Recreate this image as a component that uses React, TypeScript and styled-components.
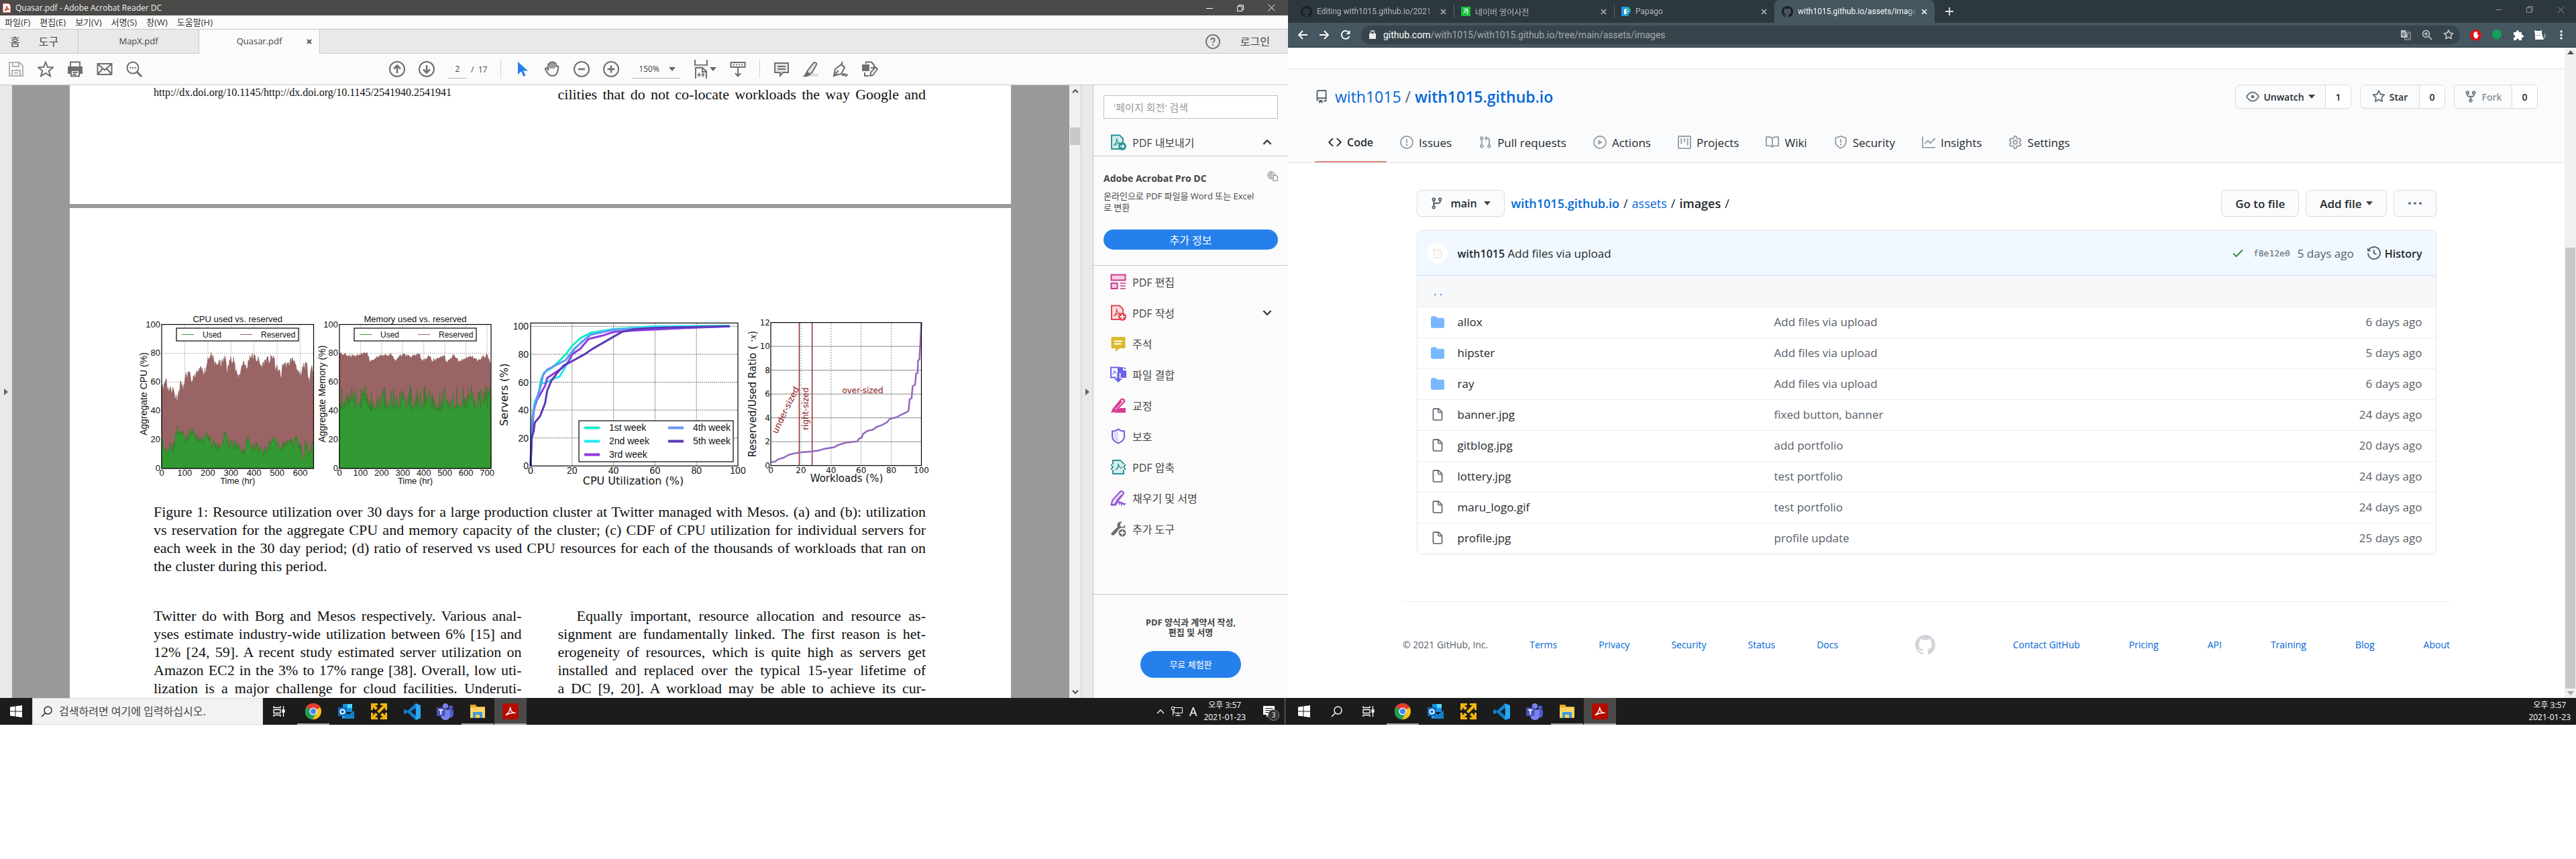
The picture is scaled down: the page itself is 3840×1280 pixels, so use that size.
import React from "react";
import styled, { createGlobalStyle, css } from "styled-components";

const sans = `"Open Sans", "Noto Sans CJK KR", sans-serif`;
const compact = `Roboto, "Noto Sans CJK KR", sans-serif`;
const serif = `"Liberation Serif", serif`;

const GlobalStyle = createGlobalStyle`
  *, *::before, *::after { box-sizing: border-box; }
  body { margin: 0; background: #fff; font-family: ${sans}; font-size: 16px; color: #24292e; }
  button, input, select { font: inherit; color: inherit; margin: 0; padding: 0; border: 0; background: none; border-radius: 0; outline: 0; }
  button { cursor: pointer; }
  a { color: inherit; text-decoration: none; }
  svg { display: block; flex: none; }
  h1, h2, p { margin: 0; font-weight: normal; }
`;

/* ---------- shared drawings ---------- */

const oct = {
  repo: "M2 2.5A2.5 2.5 0 014.5 0h8.75a.75.75 0 01.75.75v12.5a.75.75 0 01-.75.75h-2.5a.75.75 0 110-1.5h1.75v-2h-8a1 1 0 00-.714 1.7.75.75 0 01-1.072 1.05A2.495 2.495 0 012 11.5v-9zm10.5-1V9h-8c-.356 0-.694.074-1 .208V2.5a1 1 0 011-1h8zM5 12.25v3.25a.25.25 0 00.4.2l1.45-1.087a.25.25 0 01.3 0L8.6 15.7a.25.25 0 00.4-.2v-3.25a.25.25 0 00-.25-.25h-3.5a.25.25 0 00-.25.25z",
  code: "M4.72 3.22a.75.75 0 011.06 1.06L2.06 8l3.72 3.72a.75.75 0 11-1.06 1.06L.47 8.53a.75.75 0 010-1.06l4.25-4.25zm6.56 0a.75.75 0 10-1.06 1.06L13.94 8l-3.72 3.72a.75.75 0 101.06 1.06l4.25-4.25a.75.75 0 000-1.06l-4.25-4.25z",
  issue: "M8 1.5a6.5 6.5 0 100 13 6.5 6.5 0 000-13zM0 8a8 8 0 1116 0A8 8 0 010 8zm9 3a1 1 0 11-2 0 1 1 0 012 0zm-.25-6.25a.75.75 0 00-1.5 0v3.5a.75.75 0 001.5 0v-3.5z",
  pull: "M7.177 3.073L9.573.677A.25.25 0 0110 .854v4.792a.25.25 0 01-.427.177L7.177 3.427a.25.25 0 010-.354zM3.75 2.5a.75.75 0 100 1.5.75.75 0 000-1.5zm-2.25.75a2.25 2.25 0 113 2.122v5.256a2.251 2.251 0 11-1.5 0V5.372A2.25 2.25 0 011.5 3.25zM11 2.5h-1V4h1a1 1 0 011 1v5.628a2.251 2.251 0 101.5 0V5A2.5 2.5 0 0011 2.5zm1 10.25a.75.75 0 111.5 0 .75.75 0 01-1.5 0zM3.75 12a.75.75 0 100 1.5.75.75 0 000-1.5z",
  play: "M1.5 8a6.5 6.5 0 1113 0 6.5 6.5 0 01-13 0zM8 0a8 8 0 100 16A8 8 0 008 0zM6.379 5.227A.25.25 0 006 5.442v5.117a.25.25 0 00.379.214l4.264-2.559a.25.25 0 000-.428L6.379 5.227z",
  project: "M1.75 0A1.75 1.75 0 000 1.75v12.5C0 15.216.784 16 1.75 16h12.5A1.75 1.75 0 0016 14.25V1.75A1.75 1.75 0 0014.25 0H1.75zM1.5 1.75a.25.25 0 01.25-.25h12.5a.25.25 0 01.25.25v12.5a.25.25 0 01-.25.25H1.75a.25.25 0 01-.25-.25V1.75zM11.75 3a.75.75 0 00-.75.75v7.5a.75.75 0 001.5 0v-7.5a.75.75 0 00-.75-.75zm-8.25.75a.75.75 0 011.5 0v5.5a.75.75 0 01-1.5 0v-5.5zM8 3a.75.75 0 00-.75.75v3.5a.75.75 0 001.5 0v-3.5A.75.75 0 008 3z",
  book: "M0 1.75A.75.75 0 01.75 1h4.253c1.227 0 2.317.59 3 1.501A3.744 3.744 0 0111.006 1h4.245a.75.75 0 01.75.75v10.5a.75.75 0 01-.75.75h-4.507a2.25 2.25 0 00-1.591.659l-.622.621a.75.75 0 01-1.06 0l-.622-.621A2.25 2.25 0 005.258 13H.75a.75.75 0 01-.75-.75V1.75zm8.755 3a2.25 2.25 0 012.25-2.25H14.5v9h-3.757c-.71 0-1.4.201-1.992.572l.004-7.322zm-1.504 7.324l.004-5.073-.002-2.253A2.25 2.25 0 005.003 2.5H1.5v9h3.757a3.75 3.75 0 011.994.574z",
  shield: "M7.467.133a1.75 1.75 0 011.066 0l5.25 1.68A1.75 1.75 0 0115 3.48V7c0 1.566-.32 3.182-1.303 4.682-.983 1.498-2.585 2.813-5.032 3.855a1.7 1.7 0 01-1.33 0c-2.447-1.042-4.049-2.357-5.032-3.855C1.32 10.182 1 8.566 1 7V3.48a1.75 1.75 0 011.217-1.667l5.25-1.68zm.61 1.429a.25.25 0 00-.153 0l-5.25 1.68a.25.25 0 00-.174.238V7c0 1.358.275 2.666 1.057 3.86.784 1.194 2.121 2.34 4.366 3.297a.2.2 0 00.154 0c2.245-.956 3.582-2.104 4.366-3.298C13.225 9.666 13.5 8.36 13.5 7V3.48a.25.25 0 00-.174-.237l-5.25-1.68zM9 10.5a1 1 0 11-2 0 1 1 0 012 0zm-.25-5.75a.75.75 0 10-1.5 0v3a.75.75 0 001.5 0v-3z",
  graph: "M1.5 1.75a.75.75 0 00-1.5 0v12.5c0 .414.336.75.75.75h14.5a.75.75 0 000-1.5H1.5V1.75zm14.28 2.53a.75.75 0 00-1.06-1.06L10 7.94 7.53 5.47a.75.75 0 00-1.06 0L3.22 8.72a.75.75 0 001.06 1.06L7 7.06l2.47 2.47a.75.75 0 001.06 0l5.25-5.25z",
  eye: "M1.679 7.932c.412-.621 1.242-1.75 2.366-2.717C5.175 4.242 6.527 3.5 8 3.5c1.473 0 2.824.742 3.955 1.715 1.124.967 1.954 2.096 2.366 2.717a.119.119 0 010 .136c-.412.621-1.242 1.75-2.366 2.717C10.825 11.758 9.473 12.5 8 12.5c-1.473 0-2.824-.742-3.955-1.715C2.92 9.818 2.09 8.69 1.679 8.068a.119.119 0 010-.136zM8 2c-1.981 0-3.67.992-4.933 2.078C1.797 5.169.88 6.423.43 7.1a1.619 1.619 0 000 1.798c.45.678 1.367 1.932 2.637 3.024C4.329 13.008 6.019 14 8 14c1.981 0 3.67-.992 4.933-2.078 1.27-1.091 2.187-2.345 2.637-3.023a1.619 1.619 0 000-1.798c-.45-.678-1.367-1.932-2.637-3.023C11.671 2.992 9.981 2 8 2zm0 8a2 2 0 100-4 2 2 0 000 4z",
  star: "M8 .25a.75.75 0 01.673.418l1.882 3.815 4.21.612a.75.75 0 01.416 1.279l-3.046 2.97.719 4.192a.75.75 0 01-1.088.791L8 12.347l-3.766 1.98a.75.75 0 01-1.088-.79l.72-4.194L.818 6.374a.75.75 0 01.416-1.28l4.21-.611L7.327.668A.75.75 0 018 .25zm0 2.445L6.615 5.5a.75.75 0 01-.564.41l-3.097.45 2.24 2.184a.75.75 0 01.216.664l-.528 3.084 2.769-1.456a.75.75 0 01.698 0l2.77 1.456-.53-3.084a.75.75 0 01.216-.664l2.24-2.183-3.096-.45a.75.75 0 01-.564-.41L8 2.694v.001z",
  fork: "M5 3.25a.75.75 0 11-1.5 0 .75.75 0 011.5 0zm0 2.122a2.25 2.25 0 10-1.5 0v.878A2.25 2.25 0 005.75 8.5h1.5v2.128a2.251 2.251 0 101.5 0V8.5h1.5a2.25 2.25 0 002.25-2.25v-.878a2.25 2.25 0 10-1.5 0v.878a.75.75 0 01-.75.75h-4.5A.75.75 0 015 6.25v-.878zm3.75 7.378a.75.75 0 11-1.5 0 .75.75 0 011.5 0zm3-8.75a.75.75 0 100-1.5.75.75 0 000 1.5z",
  branch: "M11.75 2.5a.75.75 0 100 1.5.75.75 0 000-1.5zm-2.25.75a2.25 2.25 0 113 2.122V6A2.5 2.5 0 0110 8.5H6a1 1 0 00-1 1v1.128a2.251 2.251 0 11-1.5 0V5.372a2.25 2.25 0 111.5 0v1.836A2.492 2.492 0 016 7h4a1 1 0 001-1v-.628A2.25 2.25 0 019.5 3.25zM4.25 12a.75.75 0 100 1.5.75.75 0 000-1.5zM3.5 3.25a.75.75 0 111.5 0 .75.75 0 01-1.5 0z",
  folder: "M1.75 1A1.75 1.75 0 000 2.75v10.5C0 14.216.784 15 1.75 15h12.5A1.75 1.75 0 0016 13.25v-8.5A1.75 1.75 0 0014.25 3h-6.5a.25.25 0 01-.2-.1l-.9-1.2c-.33-.44-.85-.7-1.4-.7h-3.5z",
  file: "M3.75 1.5a.25.25 0 00-.25.25v11.5c0 .138.112.25.25.25h8.5a.25.25 0 00.25-.25V6H9.75A1.75 1.75 0 018 4.25V1.5H3.75zm5.75.56v2.19c0 .138.112.25.25.25h2.19L9.5 2.06zM2 1.75C2 .784 2.784 0 3.75 0h5.086c.464 0 .909.184 1.237.513l3.414 3.414c.329.328.513.773.513 1.237v8.086A1.75 1.75 0 0112.25 15h-8.5A1.75 1.75 0 012 13.25V1.75z",
  check: "M13.78 4.22a.75.75 0 010 1.06l-7.25 7.25a.75.75 0 01-1.06 0L2.22 9.28a.75.75 0 011.06-1.06L6 10.94l6.72-6.72a.75.75 0 011.06 0z",
  history: "M1.643 3.143L.427 1.927A.25.25 0 000 2.104V5.75c0 .138.112.25.25.25h3.646a.25.25 0 00.177-.427L2.715 4.215a6.5 6.5 0 11-1.18 4.458.75.75 0 10-1.493.154 8.001 8.001 0 101.6-5.684zM7.75 4a.75.75 0 01.75.75v2.992l2.028.812a.75.75 0 01-.557 1.392l-2.5-1A.75.75 0 017 8.25v-3.5A.75.75 0 017.75 4z",
  gear: "M7.429 1.525a6.593 6.593 0 011.142 0c.036.003.108.036.137.146l.289 1.105c.147.56.55.967.997 1.189.174.086.341.183.501.29.417.278.97.423 1.53.27l1.102-.303c.11-.03.175.016.195.046.219.31.41.641.573.989.014.031.022.11-.059.19l-.815.806c-.411.406-.562.957-.53 1.456a4.588 4.588 0 010 .582c-.032.499.119 1.05.53 1.456l.815.806c.08.08.073.159.059.19a6.494 6.494 0 01-.573.99c-.02.029-.086.074-.195.045l-1.103-.303c-.559-.153-1.112-.008-1.529.27-.16.107-.327.204-.5.29-.449.222-.851.628-.998 1.189l-.289 1.105c-.029.11-.101.143-.137.146a6.613 6.613 0 01-1.142 0c-.036-.003-.108-.037-.137-.146l-.289-1.105c-.147-.56-.55-.967-.997-1.189a4.502 4.502 0 01-.501-.29c-.417-.278-.97-.423-1.53-.27l-1.102.303c-.11.03-.175-.016-.195-.046a6.492 6.492 0 01-.573-.989c-.014-.031-.022-.11.059-.19l.815-.806c.411-.406.562-.957.53-1.456a4.587 4.587 0 010-.582c.032-.499-.119-1.05-.53-1.456l-.815-.806c-.08-.08-.073-.159-.059-.19a6.44 6.44 0 01.573-.99c.02-.029.086-.075.195-.045l1.103.303c.559.153 1.112.008 1.529-.27.16-.107.327-.204.5-.29.449-.222.851-.628.998-1.189l.289-1.105c.029-.11.101-.143.137-.146zM8 0c-.236 0-.47.01-.701.03-.743.065-1.29.615-1.458 1.261l-.29 1.106c-.017.066-.078.158-.211.224a5.994 5.994 0 00-.668.386c-.123.082-.233.09-.3.071L3.27 2.776c-.644-.177-1.392.02-1.82.63a7.977 7.977 0 00-.704 1.217c-.315.675-.111 1.422.363 1.891l.815.806c.05.048.098.147.088.294a6.084 6.084 0 000 .772c.01.147-.038.246-.088.294l-.815.806c-.474.469-.678 1.216-.363 1.891.2.428.436.835.704 1.218.428.609 1.176.806 1.82.63l1.103-.303c.066-.019.176-.011.299.071.213.143.436.272.668.386.133.066.194.158.212.224l.289 1.106c.169.646.715 1.196 1.458 1.26a8.094 8.094 0 001.402 0c.743-.064 1.29-.614 1.458-1.26l.29-1.106c.017-.066.078-.158.211-.224a5.98 5.98 0 00.668-.386c.123-.082.233-.09.3-.071l1.102.302c.644.177 1.392-.02 1.82-.63.268-.382.505-.789.704-1.217.315-.675.111-1.422-.364-1.891l-.814-.806c-.05-.048-.098-.147-.088-.294a6.1 6.1 0 000-.772c-.01-.147.039-.246.088-.294l.814-.806c.475-.469.679-1.216.364-1.891a7.992 7.992 0 00-.704-1.218c-.428-.609-1.176-.806-1.82-.63l-1.103.303c-.066.019-.176.011-.299-.071a5.991 5.991 0 00-.668-.386c-.133-.066-.194-.158-.212-.224L10.16 1.29C9.99.645 9.444.095 8.701.031A8.094 8.094 0 008 0zm1.5 8a1.5 1.5 0 11-3 0 1.5 1.5 0 013 0zM11 8a3 3 0 11-6 0 3 3 0 016 0z",
  mark: "M8 0C3.58 0 0 3.58 0 8c0 3.54 2.29 6.53 5.47 7.59.4.07.55-.17.55-.38 0-.19-.01-.82-.01-1.49-2.01.37-2.53-.49-2.69-.94-.09-.23-.48-.94-.82-1.13-.28-.15-.68-.52-.01-.53.63-.01 1.08.58 1.23.82.72 1.21 1.87.87 2.33.66.07-.52.28-.87.51-1.07-1.78-.2-3.64-.89-3.64-3.95 0-.87.31-1.59.82-2.15-.08-.2-.36-1.02.08-2.12 0 0 .67-.21 2.2.82.64-.18 1.32-.27 2-.27.68 0 1.36.09 2 .27 1.53-1.04 2.2-.82 2.2-.82.44 1.1.16 1.92.08 2.12.51.56.82 1.27.82 2.15 0 3.07-1.87 3.75-3.65 3.95.29.25.54.73.54 1.48 0 1.07-.01 1.93-.01 2.2 0 .21.15.46.55.38A8.013 8.013 0 0016 8c0-4.42-3.58-8-8-8z",
};

function Oct({ name, size = 20, color = "currentColor" }: { name: keyof typeof oct; size?: number; color?: string }) {
  return (
    <svg width={size} height={size} viewBox="0 0 16 16" fill={color} aria-hidden="true">
      <path fillRule="evenodd" d={oct[name]} />
    </svg>
  );
}

/* A 24-unit stroked drawing used by toolbars and side panels. */
function Glyph({ children, size = 24, stroke = "#6e6e6e", width = 2, fill = "none" }: {
  children: React.ReactNode; size?: number; stroke?: string; width?: number; fill?: string;
}) {
  return (
    <svg width={size} height={size} viewBox="0 0 24 24" fill={fill} stroke={stroke} strokeWidth={width} aria-hidden="true">
      {children}
    </svg>
  );
}

const Caret = styled.span<{ $color?: string; $up?: boolean }>`
  flex: none;
  width: 0;
  height: 0;
  border: 5px solid transparent;
  border-bottom-width: 0;
  border-top: 6px solid ${(p) => p.$color || "#444"};
  ${(p) => p.$up && css`transform: rotate(180deg);`}
`;

/* ---------- desktop ---------- */

const Desktop = styled.div`
  display: grid;
  grid-template-columns: 1fr 1fr;
`;

const Monitor = styled.section`
  display: flex;
  flex-direction: column;
  min-width: 0;
`;

const AppWindow = styled.div`
  flex: 1;
  display: flex;
  flex-direction: column;
  min-width: 0;
  background: #fff;
`;

const WindowControls = styled.div<{ $dim?: boolean }>`
  display: flex;
  margin-left: auto;
  color: ${(p) => (p.$dim ? "#8b9296" : "#fff")};
`;

const WindowControl = styled.button<{ $h: number }>`
  display: flex;
  align-items: center;
  justify-content: center;
  width: 46px;
  height: ${(p) => p.$h}px;
`;

function Controls({ dim, height }: { dim?: boolean; height: number }) {
  return (
    <WindowControls $dim={dim}>
      <WindowControl $h={height} aria-label="Minimize">
        <svg width="10" height="10" stroke="currentColor" fill="none"><path d="M0 5.5h10" /></svg>
      </WindowControl>
      <WindowControl $h={height} aria-label="Restore">
        <svg width="10" height="10" stroke="currentColor" fill="none"><path d="M.5 2.5h7v7h-7zM2.500 2.500v-2h7v7h-2" /></svg>
      </WindowControl>
      <WindowControl $h={height} aria-label="Close">
        <svg width="11" height="11" stroke="currentColor" fill="none"><path d="M.5.5l10 10M10.500.5l-10 10" /></svg>
      </WindowControl>
    </WindowControls>
  );
}

/* ---------- Acrobat: bars ---------- */

const TitleBar = styled.header`
  display: flex;
  align-items: center;
  gap: 7px;
  height: 23px;
  padding: 0 2px 0 4px;
  background: #4c4a48;
  color: #f2f2f2;
  font-size: 12px;
  line-height: 20px;
`;

const MenuBar = styled.nav`
  display: flex;
  gap: 14px;
  height: 21px;
  padding: 0 7px;
  background: #fbfbfb;
  border-bottom: 1px solid #c8c8c8;
  button { font-size: 13px; line-height: 18px; color: #333; }
`;

const TabBar = styled.div`
  display: flex;
  height: 36px;
  background: #e9e9e9;
  border-bottom: 1px solid #c8c8c8;
  color: #444;
  font-size: 16px;
  line-height: 34px;
`;

const HomeTabs = styled.div`
  display: flex;
  gap: 28px;
  width: 117px;
  padding-left: 15px;
  border-right: 1px solid #c8c8c8;
`;

const DocTab = styled.div<{ $active?: boolean }>`
  display: grid;
  grid-template-columns: 30px 1fr 30px;
  width: 180px;
  height: ${(p) => (p.$active ? 36 : 35)}px;
  background: ${(p) => (p.$active ? "#fbfbfb" : "transparent")};
  border-right: 1px solid #c8c8c8;
  font-size: 13px;
  text-align: center;
  > :first-child { grid-column: 2; }
`;

const TabClose = styled.button`
  display: flex;
  align-items: center;
  justify-content: center;
  color: inherit;
`;

const SignIn = styled.div`
  display: flex;
  align-items: center;
  gap: 30px;
  margin-left: auto;
  padding-right: 27px;
`;

const ToolBar = styled.div`
  display: grid;
  grid-template-columns: 568px auto 1fr;
  align-items: center;
  height: 47px;
  padding-left: 12px;
  background: #fbfbfb;
  border-bottom: 1px solid #c8c8c8;
`;

const ToolGroup = styled.div`
  display: flex;
  align-items: center;
  gap: 20px;
`;

const ToolButton = styled.button`
  display: flex;
  align-items: center;
  gap: 2px;
`;

const ToolDivider = styled.span`
  width: 1px;
  height: 28px;
  background: #d0d0d0;
`;

const PageInput = styled.input`
  width: 28px;
  height: 28px;
  border-bottom: 1px solid #b8b8b8;
  color: #444;
  font-size: 12px;
  text-align: center;
`;

const PageTotal = styled.span`
  margin-left: -14px;
  color: #444;
  font-size: 12px;
`;

const ZoomBox = styled.div`
  display: flex;
  align-items: center;
  width: 71px;
  height: 28px;
  padding: 0 7px 0 9px;
  border-bottom: 1px solid #b8b8b8;
  select { flex: 1; min-width: 0; appearance: none; color: #444; font-size: 12px; }
`;

const AcroMark = () => (
  <svg width="12" height="16" viewBox="0 0 12 16" aria-hidden="true">
    <path d="M0 1h9l3 3v11H0z" fill="#fff" stroke="#c8261c" />
    <path d="M3 12c2-2 3-5 3-7 0 3 2 5 4 5-3-.5-5 .5-7 2z" fill="none" stroke="#c8261c" strokeWidth="1.200" />
  </svg>
);

function AcrobatBars() {
  return (
    <>
      <TitleBar>
        <AcroMark />
        <span>Quasar.pdf - Adobe Acrobat Reader DC</span>
        <Controls height={21} />
      </TitleBar>
      <MenuBar>
        {["파일(F)", "편집(E)", "보기(V)", "서명(S)", "창(W)", "도움말(H)"].map((m) => <button key={m}>{m}</button>)}
      </MenuBar>
      <TabBar>
        <HomeTabs><button>홈</button><button>도구</button></HomeTabs>
        <DocTab><span>MapX.pdf</span></DocTab>
        <DocTab $active>
          <span>Quasar.pdf</span>
          <TabClose aria-label="Close Quasar.pdf">
            <svg width="8" height="8" stroke="#555" strokeWidth="2"><path d="M1 1l6 6M7 1l-6 6" /></svg>
          </TabClose>
        </DocTab>
        <SignIn>
          <ToolButton aria-label="Help">
            <Glyph size={22}><circle cx="12" cy="12" r="11" /><path d="M9 9.500c0-4 6-4 6 0 0 2.500-3 2.200-3 5M12 16.500v2" /></Glyph>
          </ToolButton>
          <button>로그인</button>
        </SignIn>
      </TabBar>
      <ToolBar>
        <ToolGroup>
          <ToolButton aria-label="Save"><Glyph stroke="#b3b3b3"><path d="M2 2h15l5 5v15H2zM7 2v6h9V2M6 22v-8h12v8M9 18h6" /></Glyph></ToolButton>
          <ToolButton aria-label="Star"><Glyph><path d="M12 1.500l3 7.500 8 .5-6.200 5 2.200 8L12 18l-7 4.500 2.200-8L1 9.500 9 9z" /></Glyph></ToolButton>
          <ToolButton aria-label="Print"><Glyph><path d="M5 8V1.500h14V8" /><path d="M1 8h22v11h-4v-5H5v5H1z" fill="#6e6e6e" stroke="none" /><path d="M6 14h12v8.500H6zM8.500 17h7M8.500 20h5" /></Glyph></ToolButton>
          <ToolButton aria-label="Mail"><Glyph><path d="M1.500 4h21v16h-21zM1.500 4L12 13.500 22.500 4M1.500 20l7.500-9M22.500 20L15 11" /></Glyph></ToolButton>
          <ToolButton aria-label="Find"><Glyph><circle cx="10" cy="10" r="8.500" /><path d="M16 16l7 7" strokeWidth="3" /><path d="M5.500 10h2M9 10h2M12.500 10h2" /></Glyph></ToolButton>
        </ToolGroup>
        <ToolGroup>
          <ToolButton aria-label="Previous page"><Glyph><circle cx="12" cy="12" r="11" /><path d="M12 18V7M7 11.500L12 6.500l5 5" strokeWidth="2.500" /></Glyph></ToolButton>
          <ToolButton aria-label="Next page"><Glyph><circle cx="12" cy="12" r="11" /><path d="M12 6v11M7 12.500l5 5 5-5" strokeWidth="2.500" /></Glyph></ToolButton>
          <PageInput aria-label="Page" defaultValue="2" />
          <PageTotal>/&nbsp; 17</PageTotal>
          <ToolDivider />
          <ToolButton aria-label="Select"><Glyph stroke="none"><path d="M5 1v19l5-4.500 3.500 7.500 3-1.500L13 14.500h7z" fill="#2680eb" /></Glyph></ToolButton>
          <ToolButton aria-label="Hand"><Glyph><path d="M6 13V5.500c0-2 2.800-2 2.800 0V11M8.800 10V3c0-2 3-2 3 0v8M11.800 10V2.800c0-2 3-2 3 0V11M14.800 10V4.500c0-2 3-2 3 0V9M17.800 9c0-2.500 3.700-2.500 3.500 0C21 14 20.500 17 18 20c-2 2.500-8 3-11 0-2-2-3.500-5-5-7.500-.8-2 1.500-2.800 2.500-1.500L7 14" /></Glyph></ToolButton>
          <ToolButton aria-label="Zoom out"><Glyph><circle cx="12" cy="12" r="11" /><path d="M7 12h10" strokeWidth="2.500" /></Glyph></ToolButton>
          <ToolButton aria-label="Zoom in"><Glyph><circle cx="12" cy="12" r="11" /><path d="M6.500 12h11M12 6.500v11" strokeWidth="2.500" /></Glyph></ToolButton>
          <ZoomBox>
            <select aria-label="Zoom" defaultValue="150%"><option>150%</option></select>
            <Caret $color="#666" />
          </ZoomBox>
          <ToolButton aria-label="Fit width">
            <svg width="22" height="28" viewBox="0 0 22 28" fill="none" stroke="#6e6e6e" strokeWidth="2"><path d="M2 0v8h18V0M3 28V12h10l6 5v11M13 12v6h6" /><path d="M2 9.500h18" stroke="#ddd" /><path d="M9 19.500L6.500 22.500 9 25.500M13 19.500l2.500 3-2.500 3M6.500 22.500h9" strokeWidth="1.500" /></svg>
            <Caret $color="#666" />
          </ToolButton>
          <ToolButton aria-label="Scrolling"><Glyph><path d="M1.500 2h21v7h-21zM5 5.500h2M9 5.500h2M13 5.500h2M17 5.500h2M12 10v12M8 18l4 4.500 4-4.500" /></Glyph></ToolButton>
          <ToolDivider />
          <ToolButton aria-label="Comment"><Glyph><path d="M2 3h20v14h-8l-4 5v-5H2z" fill="#e4e4e4" /><path d="M6 8h12M6 12h12" /></Glyph></ToolButton>
          <ToolButton aria-label="Highlight"><Glyph><path d="M9 19h14v4H9z" fill="#ddd" stroke="none" /><path d="M7 14L16 2.500c1.500-1.500 5 .5 4 3L13 18l-4 1-3-2z" fill="#e4e4e4" /><path d="M6 16l4 4-3 2-5 .5z" fill="#6e6e6e" /></Glyph></ToolButton>
          <ToolButton aria-label="Sign"><Glyph><path d="M15 3l6 6-3 1-5-5z" fill="#ddd" stroke="none" /><path d="M2 22l2-10L13 5l5 5-5 9zM2 22l7-8M13 5l2-4M14 22c2-5 3-3 3 0 2-4 3-3 3 0l3-2" /></Glyph></ToolButton>
          <ToolButton aria-label="Rotate"><Glyph><path d="M1 6h9v8H1z" fill="#6e6e6e" /><path d="M6 4V1.500h8L18 6v4h-5M4 17v5h6M12 22l1-5 7-8 3 3-7 9z" /></Glyph></ToolButton>
        </ToolGroup>
      </ToolBar>
    </>
  );
}

/* ---------- Acrobat: document ---------- */

const Workspace = styled.div`
  flex: 1;
  display: grid;
  grid-template-columns: 18px 1fr 17px 19px 290px;
  min-height: 0;
`;

const Rail = styled.div<{ $bordered?: boolean }>`
  display: flex;
  align-items: center;
  justify-content: center;
  background: #e9e9e9;
  ${(p) => p.$bordered && css`border: solid #c8c8c8; border-width: 0 1px;`}
`;

const RailArrow = ({ label }: { label: string }) => (
  <ToolButton aria-label={label}>
    <svg width="6" height="10"><path d="M0 0l6 5-6 5z" fill="#666" /></svg>
  </ToolButton>
);

const Canvas = styled.div`
  display: flex;
  flex-direction: column;
  gap: 6px;
  min-width: 0;
  padding: 0 87px 0 86px;
  overflow: hidden;
  background: #999;
  font-family: ${serif};
  font-size: 22px;
  line-height: 27px;
  color: #111;
`;

const Sheet = styled.article<{ $first?: boolean }>`
  background: #fff;
  padding: ${(p) => (p.$first ? "0 127px 150px 125px" : "154px 127px 0 125px")};
  ${(p) => !p.$first && css`flex: 1;`}
`;

const Columns = styled.div<{ $top?: number }>`
  display: grid;
  grid-template-columns: minmax(0, 1fr) minmax(0, 1fr);
  column-gap: 54px;
  margin-top: ${(p) => p.$top ?? 0}px;
`;

const Line = styled.span<{ $last?: boolean; $indent?: boolean }>`
  display: block;
  white-space: nowrap;
  text-align: left;
  text-align-last: ${(p) => (p.$last ? "left" : "justify")};
  ${(p) => p.$indent && css`padding-left: 28px;`}
`;

const SourceUrl = styled.a`
  font-size: 16px;
  line-height: 22px;
`;

const Figures = styled.div`
  display: flex;
  margin: 0 -12px 21px -22px;
`;

const caption = [
  "Figure 1: Resource utilization over 30 days for a large production cluster at Twitter managed with Mesos. (a) and (b): utilization",
  "vs reservation for the aggregate CPU and memory capacity of the cluster; (c) CDF of CPU utilization for individual servers for",
  "each week in the 30 day period; (d) ratio of reserved vs used CPU resources for each of the thousands of workloads that ran on",
  "the cluster during this period.",
];
const leftColumn = [
  "Twitter do with Borg and Mesos respectively. Various anal-",
  "yses estimate industry-wide utilization between 6% [15] and",
  "12% [24, 59]. A recent study estimated server utilization on",
  "Amazon EC2 in the 3% to 17% range [38]. Overall, low uti-",
  "lization is a major challenge for cloud facilities. Underuti-",
];
const rightColumn = [
  "Equally important, resource allocation and resource as-",
  "signment are fundamentally linked. The first reason is het-",
  "erogeneity of resources, which is quite high as servers get",
  "installed and replaced over the typical 15-year lifetime of",
  "a DC [9, 20]. A workload may be able to achieve its cur-",
];

type Pt = [number, number];

function noise(seed: number) {
  let s = seed;
  return () => {
    s = (s * 16807) % 2147483647;
    return s / 2147483647;
  };
}

function sample(points: Pt[], x: number) {
  for (let i = 1; i < points.length; i++) {
    const [x0, y0] = points[i - 1];
    const [x1, y1] = points[i];
    if (x <= x1) return y0 + ((y1 - y0) * (x - x0)) / (x1 - x0);
  }
  return points[points.length - 1][1];
}

/* Jittered trace that follows the envelope, with optional tall spikes. */
function trace(points: Pt[], end: number, jitter: number, seed: number, spike = 0): Pt[] {
  const rnd = noise(seed);
  const out: Pt[] = [];
  for (let x = 0; x <= end; x += end / 260) {
    const lift = spike ? Math.pow(rnd(), 2) * spike : 0;
    out.push([x, sample(points, x) + (rnd() - 0.5) * jitter + lift]);
  }
  return out;
}

const cpuReserved: Pt[] = [[0,60],[8,56],[20,63],[25,55],[50,55],[58,50],[68,49],[80,57],[85,62],[92,53],[105,64],[120,65],[130,60],[150,65],[165,68],[192,68],[200,77],[215,78],[230,72],[262,73],[277,77],[284,66],[295,75],[312,77],[320,67],[332,63],[340,67],[355,75],[368,68],[380,78],[402,77],[420,75],[432,70],[450,75],[470,75],[484,78],[492,70],[510,67],[518,63],[525,73],[545,71],[560,75],[580,75],[585,66],[605,64],[612,71],[628,71],[640,61],[650,72],[658,66]];
const cpuUsed: Pt[] = [[0,20],[10,14],[22,12],[35,18],[50,13],[58,20],[64,27],[90,25],[105,18],[120,25],[140,24],[160,20],[185,21],[195,26],[210,19],[240,14],[260,16],[277,25],[290,15],[300,18],[330,15],[360,12],[374,25],[385,13],[405,16],[440,11],[460,15],[480,20],[500,17],[515,12],[530,16],[555,20],[570,16],[582,22],[607,12],[609,6],[618,6],[620,18],[635,12],[658,17]];
const memReserved: Pt[] = [[0,80],[30,79],[50,78],[110,79],[130,81],[145,74],[190,78],[250,79],[258,75],[300,79],[340,78],[380,79],[390,74],[430,78],[440,75],[500,78],[506,74],[545,79],[565,74],[620,78],[655,75],[700,79],[716,74]];
const memUsed: Pt[] = [[0,41],[135,41],[150,39],[165,41],[440,41],[480,39],[500,41],[716,41]];

const svgText = { fontFamily: `"Liberation Sans", sans-serif`, fill: "#111" };
const vera = { fontFamily: `"DejaVu Sans", sans-serif`, fill: "#111" };

function AreaChart({ title, unit, left, width, xMax, ticks, reserved, used, box, labelAt }: {
  title: string; unit: string; left: number; width: number; xMax: number; ticks: number[];
  reserved: Pt[]; used: Pt[]; box: number; labelAt: number;
}) {
  const top = 19.5, bottom = 234;
  const sx = (v: number) => left + (v / xMax) * width;
  const sy = (v: number) => bottom - (v / 100) * (bottom - top);
  const line = (pts: Pt[]) => pts.map(([x, y]) => `${sx(x).toFixed(1)},${sy(y).toFixed(1)}`).join(" ");
  const area = (pts: Pt[]) => `${left},${bottom} ${line(pts)} ${left + width},${bottom}`;
  const mid = left + width / 2;
  return (
    <svg width={266} height={264} viewBox="0 0 266 264" fontSize="13" {...svgText}>
      <g stroke="#777" strokeDasharray="1 2" fill="none">
        {ticks.slice(1).map((t) => <path key={t} d={`M${sx(t)} ${top}V${bottom}`} />)}
        {[20, 40, 60, 80].map((t) => <path key={t} d={`M${left} ${sy(t)}H${left + width}`} />)}
      </g>
      <polygon points={area(reserved)} fill="#9a6464" stroke="#7d4d4d" strokeWidth=".5" />
      <polygon points={area(used)} fill="#339a33" stroke="#1f7a1f" strokeWidth=".5" />
      <rect x={left} y={top} width={width} height={bottom - top} fill="none" stroke="#000" strokeWidth="1.200" />
      <rect x={box} y={25} width={182} height={19} fill="#fff" stroke="#000" strokeWidth="1.200" />
      <path d={`M${box + 8} 34.500h18`} stroke="#339a33" />
      <path d={`M${box + 95} 34.500h18`} stroke="#9a6464" />
      <text x={box + 39} y={39} fontSize="12">Used</text>
      <text x={box + 126} y={39} fontSize="12">Reserved</text>
      <text x={mid} y={16} textAnchor="middle">{title}</text>
      {ticks.map((t) => <text key={t} x={sx(t)} y={245} textAnchor="middle">{t}</text>)}
      {[0, 20, 40, 60, 80, 100].map((t) => <text key={t} x={left - 2} y={sy(t) + 4} textAnchor="end">{t}</text>)}
      <text x={mid} y={257} textAnchor="middle">Time (hr)</text>
      <text transform={`translate(${labelAt} 123) rotate(-90)`} textAnchor="middle" fontSize="14">{unit}</text>
    </svg>
  );
}

const weeks: { name: string; color: string; pts: Pt[] }[] = [
  { name: "1st week", color: "#14efc4", pts: [[0,0],[.5,30],[2,45],[4,53],[5,62],[6.5,67],[10,70],[13,74],[17,80],[20,86],[24,91.5],[29,95.5],[40,98],[60,99.5],[96,100]] },
  { name: "2nd week", color: "#22e8f4", pts: [[0,0],[.5,32],[2,46],[4,52],[5,59],[8,60],[10,62],[14,64],[16,69],[19,77],[21,84],[25,89],[29,94.5],[40,98],[60,100],[96,100.5]] },
  { name: "3rd week", color: "#8f3ae0", pts: [[0,0],[.5,20],[1.5,40],[3,47],[7,57.5],[8,63],[11,66],[15,70],[18,74],[20,80],[24,84],[28,91],[35,93.5],[40,96],[50,97],[70,98.5],[96,100]] },
  { name: "4th week", color: "#6596f4", pts: [[0,0],[.5,28],[1.5,40],[3,48],[5,58],[6,65],[8,69],[12,72],[17,76],[20,82],[24,88],[29,94],[40,97.5],[60,99],[96,100]] },
  { name: "5th week", color: "#5c38b8", pts: [[0,0],[.5,20],[1.5,25],[2,31],[4.5,35.5],[7,45],[8,54],[10,61],[13,67],[16,72],[20,75],[26,80],[30,84],[37,90],[44,96],[50,98],[60,99],[96,100]] },
];

function CdfChart() {
  const left = 52, width = 309, top = 17.3, bottom = 230.3;
  const sx = (v: number) => left + v * 3.09;
  const sy = (v: number) => bottom - v * 2.08;
  return (
    <svg width={374} height={264} viewBox="0 0 374 264" fontSize="14" {...svgText}>
      <g stroke="#777" strokeDasharray="2 1" fill="none">
        {[20, 40, 60, 80].map((t) => <path key={t} d={`M${sx(t)} ${top}V${bottom}`} />)}
        {[20, 40, 60, 80, 100].map((t) => <path key={t} d={`M${left} ${sy(t)}H${left + width}`} />)}
      </g>
      {weeks.map((w) => (
        <polyline key={w.name} points={w.pts.map(([x, y]) => `${sx(x)},${sy(y)}`).join(" ")} fill="none" stroke={w.color} strokeWidth="3" />
      ))}
      <rect x={left} y={top} width={width} height={bottom - top} fill="none" stroke="#000" strokeWidth="1.200" />
      <rect x={124} y={163} width={230} height={61} fill="#fff" stroke="#000" strokeWidth="1.200" />
      {weeks.map((w, i) => {
        const x = i < 3 ? 132 : 257;
        const y = 173 + (i % 3) * 20;
        return (
          <g key={w.name}>
            <path d={`M${x} ${y + 0.5}h23`} stroke={w.color} strokeWidth="4" />
            <text x={x + 37} y={y + 5}>{w.name}</text>
          </g>
        );
      })}
      {[0, 20, 40, 60, 80, 100].map((t) => <text key={t} x={sx(t)} y={242} textAnchor="middle">{t}</text>)}
      {[0, 20, 40, 60, 80, 100].map((t) => <text key={t} x={left - 3} y={sy(t) + 5} textAnchor="end">{t}</text>)}
      <text {...vera} x={205} y={258} textAnchor="middle" fontSize="16">CPU Utilization (%)</text>
      <text {...vera} transform="translate(18 124) rotate(-90)" textAnchor="middle" fontSize="16">Servers (%)</text>
    </svg>
  );
}

const ratio: Pt[] = [[.4,.28],[3,.34],[5,.53],[8.5,.66],[12,.9],[16,1.03],[20,1.11],[27,1.18],[32,1.26],[35,1.39],[42.5,1.54],[44,1.69],[50,1.92],[57.6,2.03],[58.5,2.25],[60.4,2.35],[61.3,2.65],[64,2.9],[68,3.02],[70.4,3.25],[73.6,3.38],[77.3,3.64],[79,3.92],[83.5,4.05],[86,4.23],[90.4,4.49],[91.5,4.62],[92.2,5.56],[93.5,5.65],[94.2,6.65],[95.8,6.78],[96.5,7.72],[97.5,7.77],[97.8,8.8],[98.7,8.92],[99.3,10.3],[100,12]];

function RatioChart() {
  const left = 36, width = 224.5, top = 16.6, bottom = 229.7;
  const sx = (v: number) => left + v * 2.245;
  const sy = (v: number) => bottom - (v * (bottom - top)) / 12;
  const red = "#8c1515";
  return (
    <svg width={278} height={264} viewBox="0 0 278 264" fontSize="12" {...vera}>
      <g stroke="#8a8a8a" fill="none">
        {[20, 40, 60, 80].map((t) => <path key={t} strokeDasharray="2 2" d={`M${sx(t)} ${top}V${bottom}`} />)}
        {[2, 4, 6, 8, 10].map((t) => <path key={t} d={`M${left} ${sy(t)}H${left + width}`} />)}
      </g>
      <path d={`M78.400 ${top}V${bottom}M97.600 ${top}V${bottom}`} stroke={red} strokeWidth="1.300" />
      <polyline points={ratio.map(([x, y]) => `${sx(x)},${sy(y)}`).join(" ")} fill="none" stroke="#9467bd" strokeWidth="2.500" />
      <rect x={left} y={top} width={width} height={bottom - top} fill="none" stroke="#000" strokeWidth="1.200" />
      {[0, 20, 40, 60, 80, 100].map((t) => <text key={t} x={sx(t)} y={241} textAnchor="middle">{t}</text>)}
      {[0, 2, 4, 6, 8, 10, 12].map((t) => <text key={t} x={left - 1} y={sy(t) + 4} textAnchor="end">{t}</text>)}
      <text x={149} y={254} textAnchor="middle" fontSize="15">Workloads (%)</text>
      <text transform="translate(14 123) rotate(-90)" textAnchor="middle" fontSize="15">Reserved/Used Ratio ( ·<tspan fontStyle="italic" fontFamily="Liberation Serif">x</tspan>)</text>
      <text x={173} y={122} textAnchor="middle" fill={red}>over-sized</text>
      <text transform="translate(92 145) rotate(-90)" textAnchor="middle" fill={red}>right-sized</text>
      <text transform="translate(62 149) rotate(-64)" textAnchor="middle" fill={red} fontSize="13">under-sized</text>
    </svg>
  );
}

const ScrollTrack = styled.div`
  display: flex;
  flex-direction: column;
  align-items: center;
  justify-content: space-between;
  padding: 4px 1px;
  background: #f0f0f0;
`;

const ScrollThumb = styled.div<{ $grow?: boolean; $before: number; $h?: number }>`
  width: 100%;
  margin-top: ${(p) => p.$before}px;
  height: ${(p) => p.$h ?? 26}px;
  background: #c8c8c8;
  ${(p) => (p.$grow ? css`flex: 1; margin-bottom: 4px;` : css`margin-bottom: auto;`)}
`;

const Chevron = ({ down, size = 10, color = "#444" }: { down?: boolean; size?: number; color?: string }) => (
  <svg width={size} height={size} viewBox="0 0 10 10" fill="none" stroke={color} strokeWidth="1.800">
    <path d={down ? "M1 3l4 4 4-4" : "M1 7l4-4 4 4"} />
  </svg>
);

function DocumentView() {
  return (
    <Canvas>
      <Sheet $first>
        <Columns>
          <SourceUrl href="#">http://dx.doi.org/10.1145/http://dx.doi.org/10.1145/2541940.2541941</SourceUrl>
          <Line>cilities that do not co-locate workloads the way Google and</Line>
        </Columns>
      </Sheet>
      <Sheet>
        <Figures>
          <AreaChart title="CPU used vs. reserved" unit="Aggregate CPU (%)" left={34} width={226.5} xMax={658} ticks={[0, 100, 200, 300, 400, 500, 600]}
            reserved={trace(cpuReserved, 658, 6, 11)} used={trace(cpuUsed, 658, 7, 29)} box={56} labelAt={12} />
          <AreaChart title="Memory used vs. reserved" unit="Aggregate Memory (%)" left={33} width={226} xMax={719} ticks={[0, 100, 200, 300, 400, 500, 600, 700]}
            reserved={trace(memReserved, 719, 2.5, 5)} used={trace(memUsed, 719, 1, 47, 17)} box={55} labelAt={12} />
          <CdfChart />
          <RatioChart />
        </Figures>
        <p>{caption.map((t, i) => <Line key={t} $last={i === 3}>{t}</Line>)}</p>
        <Columns $top={47}>
          <p>{leftColumn.map((t) => <Line key={t}>{t}</Line>)}</p>
          <p>{rightColumn.map((t, i) => <Line key={t} $indent={i === 0}>{t}</Line>)}</p>
        </Columns>
      </Sheet>
    </Canvas>
  );
}

/* ---------- Acrobat: tools panel ---------- */

const Panel = styled.aside`
  display: flex;
  flex-direction: column;
  background: #fbfbfb;
  color: #444;
`;

const PanelTop = styled.div`
  height: 106px;
  padding: 15px 15px 0;
  border-bottom: 1px solid #c8c8c8;
`;

const PanelSearch = styled.input`
  display: block;
  width: 100%;
  height: 35px;
  padding: 0 14px;
  background: #fff;
  border: 1px solid #c0c0c0;
  font-size: 15px;
  &::placeholder { color: #999; opacity: 1; }
`;

const ToolRow = styled.button<{ $h?: number; $inset?: boolean }>`
  display: flex;
  align-items: center;
  gap: 9px;
  width: 100%;
  height: ${(p) => p.$h ?? 46}px;
  padding: ${(p) => (p.$inset ? "0 9px 0 10px" : "0 24px 0 25px")};
  color: #444;
  font-size: 16px;
  text-align: left;
  span { flex: 1; }
`;

const Promo = styled.div`
  height: 163px;
  padding: 22px 15px;
  border-bottom: 1px solid #c8c8c8;
`;

const PromoHead = styled.div`
  display: flex;
  justify-content: space-between;
  align-items: flex-start;
  font-size: 14px;
  font-weight: 700;
  line-height: 22px;
`;

const PromoText = styled.p`
  margin-top: 7px;
  font-size: 13px;
  line-height: 17px;
`;

const Pill = styled.button<{ $small?: boolean }>`
  display: block;
  width: ${(p) => (p.$small ? "150px" : "100%")};
  height: ${(p) => (p.$small ? 40 : 30)}px;
  margin: ${(p) => (p.$small ? "20px auto 0" : "24px 0 0")};
  border-radius: 20px;
  background: #2680eb;
  color: #fff;
  font-size: ${(p) => (p.$small ? 13 : 16)}px;
  font-weight: 400;
`;

const ToolList = styled.div`
  flex: 1;
  padding-top: 1px;
`;

const Trial = styled.div`
  height: 155px;
  padding-top: 34px;
  border-top: 1px solid #c8c8c8;
  font-size: 13px;
  font-weight: 700;
  line-height: 15px;
  text-align: center;
`;

const pdfPage = "M2 1.500h12l5 5V22H2z";
const pdfSwoosh = "M5.500 17c3-3 4.500-7 4-11 .5 5 3 7.500 6.500 7.500-4-.5-7.500 1-10.500 3.500z";

const toolIcons: Record<string, React.ReactNode> = {
  export: <Glyph stroke="#2d9594"><path d={pdfPage} fill="#d5ecec" /><path d={pdfSwoosh} strokeWidth="1.300" /><circle cx="18" cy="18" r="6" fill="#2d9594" stroke="none" /><path d="M14.500 18h6M18 15.500l2.500 2.500-2.500 2.500" stroke="#fff" strokeWidth="1.600" /></Glyph>,
  edit: <Glyph stroke="#c83c8c"><path d="M1.500 1.500h21v8h-21zM1.500 14h9v8h-9z" fill="#f8cfe6" /><path d="M14.500 14h8.500M14.500 18h8.500M14.500 22h8.500" strokeWidth="1.300" /></Glyph>,
  create: <Glyph stroke="#dc4b50"><path d={pdfPage} fill="#fbdcdd" /><path d={pdfSwoosh} strokeWidth="1.300" /><circle cx="18" cy="18" r="6" fill="#dc4b50" stroke="none" /><path d="M14.500 18h7M18 14.500v7" stroke="#fff" strokeWidth="1.800" /></Glyph>,
  note: <Glyph stroke="none"><path d="M3 2h18a1.500 1.500 0 011.500 1.500v14A1.500 1.500 0 0121 19h-7l-6 5v-5H3a1.500 1.500 0 01-1.500-1.500v-14A1.500 1.500 0 013 2z" fill="#dcb92c" /><path d="M6 8.500h12M6 12.500h10" stroke="#fff" strokeWidth="1.800" /></Glyph>,
  combine: <Glyph stroke="#6a63e8"><path d="M1 1.500h11v15H1z" /><path d="M3.500 12c2-2 3-4 2.500-6 .5 3 2 4 4 4" strokeWidth="1.200" /><path d="M13 1h6v5h5v11H13zM20.500.5L24 4h-3.500z" fill="#6a63e8" stroke="none" /><path d="M12 10v9" stroke="#fbfbfb" strokeWidth="7" /><path d="M12 10v9" strokeWidth="3.500" /><path d="M6 18h12l-6 6z" fill="#6a63e8" stroke="none" /></Glyph>,
  redact: <Glyph stroke="#d83b8f"><path d="M14 16h9v7H6z" fill="#d83b8f" stroke="none" /><path d="M5 17L16 3.500c2-2.500 6.500.5 5 3.500L9 19zM8 16l9-10" fill="#f8cfe6" /><path d="M4 16.500l6 5L1 23z" fill="#d83b8f" stroke="none" /></Glyph>,
  shield: <Glyph stroke="#6a63d8"><path d="M12 1.500c3 2.500 6 3 9 3V12c0 5-4 8.500-9 10.500C7 20.500 3 17 3 12V4.500c3 0 6-.5 9-3z" /><path d="M12 3.500v17C8 19 4.500 16 4.500 12V6c3 0 5-.8 7.500-2.500z" fill="#dddcf8" stroke="none" /></Glyph>,
  compress: <Glyph stroke="#2d9594"><path d="M4 8V2h11l5 5v1M4 16v6h16v-6" /><path d="M5 3h10l4 4v14H5z" fill="#d5ecec" stroke="none" /><path d="M8 16c3-2 4.500-5 4-9 .5 4 2 6 5.500 6.500" strokeWidth="1.500" /><path d="M1 8l3 4-3 4M23 8l-3 4 3 4" /></Glyph>,
  sign: <Glyph stroke="#9256d9"><path d="M1.500 22l2-7L15 2.500c2-2 6 1 4.500 4L9 19l-3 3zM9 17l8-9" fill="#e9dcfa" /><path d="M1 22.500h7c5-7 5-6 6-2 2-3 3-3 3 1 2-3 3-2 3 0l3-1" /></Glyph>,
  wrench: <Glyph stroke="none"><path d="M2 18L11 9C9 4 13 0 18 1.500L14.500 5l1 3.500 3.500 1L22 6c1 4-1 7-5 7l-3-.5L6 21c-3 2-6-1-4-3z" fill="#6e6e6e" /><circle cx="18" cy="18" r="6.500" fill="#6e6e6e" stroke="#fbfbfb" /><path d="M14.500 18h7M18 14.500v7" stroke="#fff" strokeWidth="1.800" /></Glyph>,
};

const toolRows: [string, string, boolean?][] = [
  ["edit", "PDF 편집"], ["create", "PDF 작성", true], ["note", "주석"], ["combine", "파일 결합"],
  ["redact", "교정"], ["shield", "보호"], ["compress", "PDF 압축"], ["sign", "채우기 및 서명"], ["wrench", "추가 도구"],
];

function ToolsPanel() {
  return (
    <Panel>
      <PanelTop>
        <PanelSearch aria-label="도구 검색" placeholder="'페이지 회전' 검색" />
        <ToolRow $h={70} $inset>{toolIcons.export}<span>PDF 내보내기</span><Chevron size={14} /></ToolRow>
      </PanelTop>
      <Promo>
        <PromoHead>
          <span>Adobe Acrobat Pro DC</span>
          <svg width="16" height="15" viewBox="0 0 16 15" fill="none" stroke="#999"><circle cx="6" cy="6" r="5.500" /><path d="M6 .5v11M.5 6h11M2 3h8M2 9h6M6 .5C2.500 4 2.500 8 6 11.500" /><path d="M9 6h4l2.500 2.500v6H9z" fill="#fff" strokeWidth="1.500" /></svg>
        </PromoHead>
        <PromoText>온라인으로 PDF 파일을 Word 또는 Excel<br />로 변환</PromoText>
        <Pill>추가 정보</Pill>
      </Promo>
      <ToolList>
        {toolRows.map(([icon, label, open]) => (
          <ToolRow key={icon}>{toolIcons[icon]}<span>{label}</span>{open && <Chevron size={14} down />}</ToolRow>
        ))}
      </ToolList>
      <Trial>
        PDF 양식과 계약서 작성,<br />편집 및 서명
        <Pill $small>무료 체험판</Pill>
      </Trial>
    </Panel>
  );
}

/* ---------- Browser ---------- */

const TabStrip = styled.div`
  display: flex;
  height: 34px;
  padding-left: 8px;
  background: #2d383e;
  font-family: ${compact};
`;

const BrowserTab = styled.div<{ $active?: boolean }>`
  display: flex;
  align-items: center;
  gap: 7px;
  width: 239px;
  padding: 0 11px;
  border-radius: 8px 8px 0 0;
  background: ${(p) => (p.$active ? "#455760" : "transparent")};
  color: ${(p) => (p.$active ? "#fff" : "#b4babd")};
  font-size: 12px;
  a {
    flex: 1;
    min-width: 0;
    white-space: nowrap;
    mask-image: linear-gradient(to right, #000 92%, transparent);
  }
`;

const TabRule = styled.span`
  align-self: center;
  width: 1px;
  height: 20px;
  margin-right: -1px;
  background: #5b6468;
`;

const NewTab = styled.button`
  display: flex;
  align-items: center;
  justify-content: center;
  width: 44px;
`;

const AddressRow = styled.div`
  display: flex;
  align-items: center;
  gap: 7px;
  height: 37px;
  padding: 0 6px;
  background: #455760;
  border-bottom: 1px solid #2d383e;
`;

const BarButtons = styled.div`
  display: flex;
`;

const BarButton = styled.button`
  display: flex;
  align-items: center;
  justify-content: center;
  width: 32px;
  height: 28px;
`;

const Omnibox = styled.div`
  flex: 1;
  display: flex;
  align-items: center;
  gap: 11px;
  height: 28px;
  padding: 0 1px 0 12px;
  border-radius: 14px;
  background: #38444b;
  color: #a3abaf;
  font-family: ${compact};
  font-size: 14px;
  p { flex: 1; }
  b { color: #fff; font-weight: 400; }
`;

const X = ({ color }: { color: string }) => (
  <svg width="9" height="9" stroke={color} strokeWidth="1.500"><path d="M1 1l7 7M8 1l-7 7" /></svg>
);

const Papago = () => (
  <svg width="14" height="14" viewBox="0 0 14 14"><path d="M0 0h8c4 0 6 3 6 6-1 4-3 4-4 8H0z" fill="#1e9bf0" /><path d="M4 4c3-2 7 0 7 3l-3 1c0 3-2 4-4 3z" fill="#fff" /><path d="M8 1c3 0 5 2 5 5H9zM6 12l4-2v4z" fill="#20c05a" /><circle cx="8" cy="6" r="1" fill="#222" /></svg>
);

const Naver = styled.span`
  width: 14px;
  height: 14px;
  background: #10c33c;
  color: #fff;
  font-size: 9px;
  font-weight: 700;
  line-height: 14px;
  text-align: center;
`;

function BrowserChrome() {
  return (
    <>
      <TabStrip>
        <BrowserTab><Oct name="mark" size={17} color="#1b1f23" /><a href="#">Editing with1015.github.io/2021</a><button aria-label="Close tab"><X color="#b4babd" /></button></BrowserTab>
        <TabRule />
        <BrowserTab><Naver>가</Naver><a href="#">네이버 영어사전</a><button aria-label="Close tab"><X color="#b4babd" /></button></BrowserTab>
        <TabRule />
        <BrowserTab><Papago /><a href="#">Papago</a><button aria-label="Close tab"><X color="#b4babd" /></button></BrowserTab>
        <BrowserTab $active><Oct name="mark" size={17} color="#1b1f23" /><a href="#">with1015.github.io/assets/image</a><button aria-label="Close tab"><X color="#fff" /></button></BrowserTab>
        <NewTab aria-label="New tab"><svg width="12" height="12" stroke="#dfe3e5" strokeWidth="1.800"><path d="M6 0v12M0 6h12" /></svg></NewTab>
        <Controls dim height={28} />
      </TabStrip>
      <AddressRow>
        <BarButtons>
          <BarButton aria-label="Back"><svg width="16" height="16" fill="none" stroke="#fff" strokeWidth="1.800"><path d="M15 8H2M8 2L2 8l6 6" /></svg></BarButton>
          <BarButton aria-label="Forward"><svg width="16" height="16" fill="none" stroke="#fff" strokeWidth="1.800"><path d="M1 8h13M8 2l6 6-6 6" /></svg></BarButton>
          <BarButton aria-label="Reload"><svg width="16" height="16" fill="none" stroke="#fff" strokeWidth="1.900"><path d="M13.500 10A6 6 0 1112.500 4" /><path d="M14.500 1v6h-6z" fill="#fff" stroke="none" /></svg></BarButton>
        </BarButtons>
        <Omnibox>
          <svg width="10" height="14" viewBox="0 0 10 14"><path d="M0 5h10v8H0z" fill="#e8eaeb" /><path d="M2.500 5V3c0-3 5-3 5 0v2" fill="none" stroke="#e8eaeb" strokeWidth="1.400" /></svg>
          <p><b>github.com</b>/with1015/with1015.github.io/tree/main/assets/images</p>
          <BarButtons>
            <BarButton aria-label="Translate"><svg width="16" height="16" viewBox="0 0 16 16"><path d="M6 4h9v11H7z" fill="none" stroke="#b9bfc2" /><path d="M1 1h7l3 11H1z" fill="#b9bfc2" /><path d="M8 7h5M10.500 6v1c0 2-1 4-3 5M9 9l4 4" stroke="#b9bfc2" fill="none" /><path d="M6.500 5.500A2 2 0 106.500 8V7H5" stroke="#38444b" fill="none" /></svg></BarButton>
            <BarButton aria-label="Zoom"><svg width="16" height="16" viewBox="0 0 16 16" fill="none" stroke="#c9ced0" strokeWidth="1.500"><circle cx="6.500" cy="6.500" r="5" /><path d="M10.500 10.500L15 15M4 6.500h5M6.500 4v5" /></svg></BarButton>
            <BarButton aria-label="Bookmark"><Oct name="star" size={16} color="#c9ced0" /></BarButton>
          </BarButtons>
        </Omnibox>
        <BarButtons>
          <BarButton aria-label="Ad blocker"><svg width="17" height="17" viewBox="0 0 16 16"><circle cx="8" cy="8" r="8" fill="#d8141c" /><path d="M5 9V5q.7-1 1.300 0V3.500q.7-1 1.400 0V3q.7-1 1.400 0v1q.7-1 1.300 0v4l1-.8q1 0 .6 1L10 12.500H7z" fill="#fff" /></svg></BarButton>
          <BarButton aria-label="Chat"><svg width="16" height="17" viewBox="0 0 16 17"><circle cx="8" cy="7" r="7" fill="#12a05c" /><path d="M8 12h4l-4 5z" fill="#12a05c" /></svg></BarButton>
          <BarButton aria-label="Extensions"><svg width="17" height="16" viewBox="0 0 17 16" fill="#fff"><path d="M1 4h4C4 1 9 0 9 4h4v4c4-1 4 4.500 0 4v4H9c0-3-4-3-4 0H1v-4c3 0 3-4 0-4z" /></svg></BarButton>
          <BarButton aria-label="Profile"><svg width="18" height="16" viewBox="0 0 18 16"><path d="M1 1l3 1h5l3-1v5l3 9H2V8z" fill="#fff" /><path d="M4 9h5M15 13c3-2 2-5 1-7" stroke="#fff" fill="none" /><path d="M4 8.500h6M5 5h1M9 5h1" stroke="#8a8f92" /></svg></BarButton>
          <BarButton aria-label="Menu"><svg width="4" height="14" fill="#fff"><circle cx="2" cy="2" r="1.700" /><circle cx="2" cy="7" r="1.700" /><circle cx="2" cy="12" r="1.700" /></svg></BarButton>
        </BarButtons>
      </AddressRow>
    </>
  );
}

const PageArea = styled.div`
  flex: 1;
  display: grid;
  grid-template-columns: 1fr 17px;
`;

const GitHubPage = styled.div`
  padding-top: 31px;
  min-width: 0;
`;

const RepoHeader = styled.header`
  padding: 23px 40px 0;
  background: #fafbfc;
  border: solid #e1e4e8;
  border-width: 1px 0;
`;

const RepoTop = styled.div`
  display: flex;
  align-items: center;
  height: 36px;
`;

const RepoTitle = styled.h1`
  display: flex;
  align-items: center;
  gap: 6px;
  margin-right: auto;
  color: #586069;
  font-size: 23px;
  line-height: 34px;
  svg { margin-right: 4px; }
  a { color: #0366d6; }
  a:last-child { font-weight: 600; }
`;

const Counter = styled.div`
  display: flex;
  height: 36px;
  margin-left: 13px;
  border: 1px solid #d9dcdf;
  border-radius: 7px;
  background: #fafbfc;
  overflow: hidden;
  box-shadow: 0 1px 0 rgba(27, 31, 35, 0.04);
  font-size: 14px;
  font-weight: 600;
`;

const CounterButton = styled.button<{ $w: number; $muted?: boolean }>`
  display: flex;
  align-items: center;
  justify-content: center;
  gap: 6px;
  width: ${(p) => p.$w}px;
  color: ${(p) => (p.$muted ? "#8a9097" : "#24292e")};
`;

const CounterValue = styled.a`
  display: flex;
  align-items: center;
  justify-content: center;
  width: 38px;
  background: #fff;
  border-left: 1px solid #d9dcdf;
`;

const RepoNav = styled.nav`
  display: flex;
  margin-top: 20px;
`;

const RepoNavItem = styled.a<{ $active?: boolean }>`
  display: flex;
  align-items: center;
  gap: 8px;
  height: 60px;
  padding: 2px 20px 0;
  border-bottom: 2px solid ${(p) => (p.$active ? "#e08c7c" : "transparent")};
  font-size: ${(p) => (p.$active ? 16 : 17)}px;
  font-weight: ${(p) => (p.$active ? 600 : 400)};
  svg { color: ${(p) => (p.$active ? "#24292e" : "#959da5")}; }
`;

const Main = styled.main`
  width: calc(100% - 80px);
  max-width: 1520px;
  margin: 0 auto;
  padding-top: 40px;
`;

const FileNav = styled.div`
  display: flex;
  align-items: center;
  gap: 10px;
`;

const Crumbs = styled.nav`
  display: flex;
  gap: 6px;
  margin-right: auto;
  font-size: 18px;
  a { color: #0366d6; }
  a:first-child, b { font-weight: 600; }
`;

const Button = styled.button`
  display: flex;
  align-items: center;
  justify-content: center;
  gap: 6px;
  height: 40px;
  padding: 0 20px;
  border: 1px solid #d9dcdf;
  border-radius: 7px;
  background: #fafbfc;
  box-shadow: 0 1px 0 rgba(27, 31, 35, 0.04);
  font-size: 17px;
  font-weight: 600;
`;

const BranchButton = styled(Button)`
  gap: 10px;
  width: 131px;
  font-size: 16px;
`;

const FileBox = styled.div`
  margin-top: 20px;
  border: 1px solid #e1e4e8;
  border-radius: 7px;
  overflow: hidden;
`;

const CommitBar = styled.div`
  display: flex;
  align-items: center;
  gap: 6px;
  height: 67px;
  padding: 0 20px 0 15px;
  background: #f1f8ff;
  border-bottom: 1px solid #c8e1ff;
  font-size: 17px;
  b { font-size: 16px; font-weight: 600; }
  time { margin: 0 14px 0 5px; color: #586069; }
`;

const Avatar = styled.span`
  display: flex;
  align-items: center;
  justify-content: center;
  width: 30px;
  height: 30px;
  margin-right: 9px;
  border-radius: 50%;
  background: #fff;
`;

const Sha = styled.a`
  margin-left: 7px;
  color: #586069;
  font-family: "DejaVu Sans Mono", monospace;
  font-size: 13px;
`;

const CommitText = styled.span`
  flex: 1;
`;

const FileTable = styled.table`
  width: 100%;
  table-layout: fixed;
  border-collapse: collapse;
  font-size: 17px;
  td { height: 46px; padding: 0; border-top: 1px solid #eaecef; line-height: 24px; }
  tr:first-child td { border-top: 0; background: #f6f8fa; color: #0366d6; }
  td:nth-child(1) { width: 60px; padding-left: 20px; }
  td:nth-child(2) { width: 472px; }
  td:nth-child(3) { color: #586069; }
  td:nth-child(4) { width: 200px; padding-right: 20px; color: #586069; text-align: right; }
`;

const Footer = styled.footer`
  display: flex;
  justify-content: space-between;
  align-items: center;
  width: calc(100% - 40px);
  max-width: 1561px;
  height: 144px;
  margin: 70px auto 0;
  padding-bottom: 16px;
  border-top: 1px solid #eaecef;
  color: #586069;
  font-size: 14px;
  a { color: #0366d6; }
`;

const FooterGroup = styled.div<{ $gap: number }>`
  display: flex;
  gap: ${(p) => p.$gap}px;
`;

const files: [string, string, string][] = [
  ["allox", "Add files via upload", "6 days ago"],
  ["hipster", "Add files via upload", "5 days ago"],
  ["ray", "Add files via upload", "6 days ago"],
  ["banner.jpg", "fixed button, banner", "24 days ago"],
  ["gitblog.jpg", "add portfolio", "20 days ago"],
  ["lottery.jpg", "test portfolio", "24 days ago"],
  ["maru_logo.gif", "test portfolio", "24 days ago"],
  ["profile.jpg", "profile update", "25 days ago"],
];

const navItems: [keyof typeof oct, string][] = [
  ["code", "Code"], ["issue", "Issues"], ["pull", "Pull requests"], ["play", "Actions"], ["project", "Projects"],
  ["book", "Wiki"], ["shield", "Security"], ["graph", "Insights"], ["gear", "Settings"],
];

function GitHub() {
  return (
    <PageArea>
      <GitHubPage>
        <RepoHeader>
          <RepoTop>
            <RepoTitle>
              <Oct name="repo" />
              <a href="#">with1015</a><span>/</span><a href="#">with1015.github.io</a>
            </RepoTitle>
            <Counter><CounterButton $w={133}><Oct name="eye" color="#6a737d" />Unwatch<Caret /></CounterButton><CounterValue href="#">1</CounterValue></Counter>
            <Counter><CounterButton $w={87}><Oct name="star" color="#6a737d" />Star</CounterButton><CounterValue href="#">0</CounterValue></Counter>
            <Counter><CounterButton $w={85} $muted><Oct name="fork" color="#6a737d" />Fork</CounterButton><CounterValue href="#">0</CounterValue></Counter>
          </RepoTop>
          <RepoNav>
            {navItems.map(([icon, label], i) => (
              <RepoNavItem key={label} href="#" $active={i === 0}><Oct name={icon} />{label}</RepoNavItem>
            ))}
          </RepoNav>
        </RepoHeader>
        <Main>
          <FileNav>
            <BranchButton><Oct name="branch" color="#586069" />main<Caret /></BranchButton>
            <Crumbs><a href="#">with1015.github.io</a><span>/</span><a href="#">assets</a><span>/</span><b>images</b><span>/</span></Crumbs>
            <Button>Go to file</Button>
            <Button>Add file<Caret /></Button>
            <Button aria-label="More options">
              <svg width="22" height="6" fill="#6a737d"><circle cx="3" cy="3" r="2" /><circle cx="11" cy="3" r="2" /><circle cx="19" cy="3" r="2" /></svg>
            </Button>
          </FileNav>
          <FileBox>
            <CommitBar>
              <Avatar><svg width="18" height="18" viewBox="0 0 18 18" fill="none" stroke="#d5cccc"><path d="M3 8V3l3 2h4l3-2v5M4 8v6M13 8c3 0 3 3 1 6M7 11h4M3 16h12" strokeWidth=".8" /></svg></Avatar>
              <CommitText><b>with1015</b> Add files via upload</CommitText>
              <Oct name="check" color="#22863a" />
              <Sha href="#">f8e12e0</Sha>
              <time>5 days ago</time>
              <Oct name="history" color="#586069" />
              <a href="#"><b>History</b></a>
            </CommitBar>
            <FileTable>
              <tbody>
                <tr><td><a href="#">&nbsp;. .</a></td><td /><td /><td /></tr>
                {files.map(([name, message, age], i) => (
                  <tr key={name}>
                    <td><Oct name={i < 3 ? "folder" : "file"} color={i < 3 ? "#79b8ff" : "#6a737d"} /></td>
                    <td><a href="#">{name}</a></td>
                    <td><a href="#">{message}</a></td>
                    <td>{age}</td>
                  </tr>
                ))}
              </tbody>
            </FileTable>
          </FileBox>
        </Main>
        <Footer>
          <FooterGroup $gap={62}>
            <span>© 2021 GitHub, Inc.</span>
            {["Terms", "Privacy", "Security", "Status", "Docs"].map((t) => <a key={t} href="#">{t}</a>)}
          </FooterGroup>
          <Oct name="mark" size={30} color="#d1d5da" />
          <FooterGroup $gap={73}>
            {["Contact GitHub", "Pricing", "API", "Training", "Blog", "About"].map((t) => <a key={t} href="#">{t}</a>)}
          </FooterGroup>
        </Footer>
      </GitHubPage>
      <ScrollTrack>
        <Caret $up $color="#505050" />
        <ScrollThumb $grow $before={288} />
        <Caret $color="#a3a3a3" />
      </ScrollTrack>
    </PageArea>
  );
}

/* ---------- Windows taskbar ---------- */

const Bar = styled.footer`
  display: flex;
  height: 40px;
  background: #1c1c1c;
  color: #fff;
`;

const Slot = styled.button<{ $running?: boolean; $active?: boolean; $after?: boolean }>`
  display: flex;
  align-items: center;
  justify-content: center;
  width: 48px;
  margin-right: ${(p) => (p.$after ? 3 : 0)}px;
  background: ${(p) => (p.$active ? "#4a4a4a" : "transparent")};
  ${(p) => p.$running && css`box-shadow: inset 0 -2px #a8a8a8;`}
`;

const Apps = styled.div`
  display: flex;
  gap: 1px;
`;

const SearchBox = styled.label`
  display: flex;
  align-items: center;
  gap: 10px;
  width: 344px;
  padding-left: 12px;
  background: #f2f2f2;
  border: 1px solid #d8d8d8;
  color: #333;
  font-size: 16px;
  input { flex: 1; min-width: 0; }
  input::placeholder { color: #444; opacity: 1; }
`;

const Tray = styled.div`
  display: flex;
  align-items: center;
  gap: 10px;
  margin-left: auto;
  padding-right: 8px;
`;

const Clock = styled.time`
  font-size: 12px;
  line-height: 18px;
  text-align: center;
`;

const InputMode = styled.span`
  font-size: 18px;
`;

const Notices = styled.button`
  position: relative;
  width: 24px;
  height: 28px;
  margin-left: 16px;
`;

const NoticeCount = styled.span`
  position: absolute;
  right: 0;
  bottom: 0;
  width: 17px;
  height: 17px;
  border: 1px solid #888;
  border-radius: 50%;
  background: #333;
  font-size: 10px;
  line-height: 15px;
`;

const Peek = styled.span`
  width: 5px;
  border-left: 1px solid #777;
`;

const Magnifier = ({ color }: { color: string }) => (
  <svg width="17" height="17" viewBox="0 0 17 17" fill="none" stroke={color} strokeWidth="1.400"><circle cx="10.500" cy="6.500" r="5.500" /><path d="M6.500 10.500L1 16" /></svg>
);

const apps: { label: string; icon: React.ReactNode; running?: boolean; active?: boolean }[] = [
  { label: "Chrome", running: true, icon: <svg width="24" height="24" viewBox="0 0 24 24"><circle cx="12" cy="12" r="12" fill="#fbc116" /><path d="M12 12L1.600 6A12 12 0 0122.400 6z" fill="#e33b2e" /><path d="M12 12L1.600 6A12 12 0 0010.500 24L17 15z" fill="#1da15a" /><circle cx="12" cy="12" r="5.600" fill="#fff" /><circle cx="12" cy="12" r="4.300" fill="#4285f4" /></svg> },
  { label: "Outlook", icon: <svg width="24" height="24" viewBox="0 0 24 24"><path d="M7 1h14v12H7z" fill="#1490df" /><path d="M14 1h7v6h-7z" fill="#50d9ff" /><path d="M6 11l9 6 9-6v12H6z" fill="#28a8ea" /><path d="M6 23l18-12v12z" fill="#0a63b5" opacity=".6" /><rect y="6" width="13" height="13" rx="1" fill="#0f6cbd" /><circle cx="6.500" cy="12.500" r="3.200" fill="none" stroke="#fff" strokeWidth="1.800" /></svg> },
  { label: "VMware", icon: <svg width="24" height="24" viewBox="0 0 24 24" fill="#f5b60d"><path d="M0 0h10v3H6l4 4-3 3-4-4v4H0zM24 0H14v3h4L9 12l3 3 9-9v4h3zM0 14h3v4l4-4 3 3-4 4h4v3H0zM24 24H14v-3h4l-4-4 3-3 4 4v-4h3z" /></svg> },
  { label: "Visual Studio Code", icon: <svg width="25" height="25" viewBox="0 0 24 24"><path d="M17 0l7 3v18l-7 3L5 13 2 15.500 0 14.500v-5l2-1L5 11z" fill="#0d7fcf" /><path d="M17 0l7 3v18l-7 3z" fill="#2aa8f2" /><path d="M17 6.500v11L10 12z" fill="#1c1c1c" /></svg> },
  { label: "Teams", icon: <svg width="25" height="25" viewBox="0 0 24 24"><circle cx="20" cy="6" r="3" fill="#5059c9" /><circle cx="12.500" cy="4" r="4" fill="#7b83eb" /><path d="M15 9h9v7c0 4-5 6-7 3z" fill="#5059c9" /><path d="M6 9h13v9c0 8-13 8-13 0z" fill="#7b83eb" /><rect y="6" width="12" height="12" rx="1" fill="#4b53bc" /><path d="M3 9.500h6M6 9.500V16" stroke="#fff" strokeWidth="1.700" /></svg> },
  { label: "File Explorer", running: true, icon: <svg width="24" height="24" viewBox="0 0 24 24"><path d="M1 2h8l2 3h12v17H1z" fill="#e9a820" /><path d="M1 6h22v15H1z" fill="#fcd462" /><path d="M5 22v-9h14v9h-4v-5H9v5z" fill="#3c9ade" /></svg> },
  { label: "Acrobat Reader", running: true, active: true, icon: <svg width="24" height="24" viewBox="0 0 24 24"><rect width="24" height="24" rx="4" fill="#b30b00" /><path d="M5 17.500c4-3 7-8 6.500-12 .5 6 3.500 9 8 9-5-1-10 .5-14.500 3z" fill="none" stroke="#fff" strokeWidth="1.500" /></svg> },
];

function Taskbar({ primary }: { primary?: boolean }) {
  return (
    <Bar>
      <Slot aria-label="Start">
        <svg width="18" height="18" viewBox="0 0 18 18" fill="#fff"><path d="M0 2.500L7.500 1.500v7H0zM8.500 1.300L18 0v8.500H8.500zM0 9.500h7.500v7L0 15.500zM8.500 9.500H18V18l-9.500-1.300z" /></svg>
      </Slot>
      {primary ? (
        <SearchBox><Magnifier color="#222" /><input aria-label="검색" placeholder="검색하려면 여기에 입력하십시오." /></SearchBox>
      ) : (
        <Slot aria-label="Search"><Magnifier color="#fff" /></Slot>
      )}
      <Slot $after aria-label="Task view">
        <svg width="18" height="18" viewBox="0 0 18 18" fill="none" stroke="#fff" strokeWidth="1.300"><path d="M1 1v2.500h10V1M1 6.500h10v5H1zM1 17v-2.500h10V17M15.500 1v16M14 7h3v3h-3z" /></svg>
      </Slot>
      <Apps>
        {apps.map((a) => <Slot key={a.label} aria-label={a.label} $running={a.running} $active={a.active}>{a.icon}</Slot>)}
      </Apps>
      <Tray>
        {primary && (
          <>
            <svg width="12" height="8" fill="none" stroke="#fff" strokeWidth="1.300"><path d="M1 7l5-5 5 5" /></svg>
            <svg width="17" height="14" viewBox="0 0 17 14" fill="none" stroke="#fff"><path d="M5 1.500h11.500v8H4v-4M.5.5h4v4h-4zM2.500 5v8.500M10 10v3M6 13.500h8" /></svg>
            <InputMode>A</InputMode>
          </>
        )}
        <Clock>오후 3:57<br />2021-01-23</Clock>
        {primary && (
          <Notices aria-label="Notifications">
            <svg width="17" height="17" viewBox="0 0 17 17"><path d="M0 0h17v13H8l-3 4v-4H0z" fill="#fff" /><path d="M3 3.500h11M3 6.500h11M3 9.500h7" stroke="#1c1c1c" /></svg>
            <NoticeCount>3</NoticeCount>
          </Notices>
        )}
      </Tray>
      {primary && <Peek />}
    </Bar>
  );
}

export default function App() {
  return (
    <Desktop>
      <GlobalStyle />
      <Monitor>
        <AppWindow>
          <AcrobatBars />
          <Workspace>
            <Rail><RailArrow label="Show navigation" /></Rail>
            <DocumentView />
            <ScrollTrack>
              <Chevron />
              <ScrollThumb $before={49} />
              <Chevron down />
            </ScrollTrack>
            <Rail $bordered><RailArrow label="Hide tools" /></Rail>
            <ToolsPanel />
          </Workspace>
        </AppWindow>
        <Taskbar primary />
      </Monitor>
      <Monitor>
        <AppWindow>
          <BrowserChrome />
          <GitHub />
        </AppWindow>
        <Taskbar />
      </Monitor>
    </Desktop>
  );
}
